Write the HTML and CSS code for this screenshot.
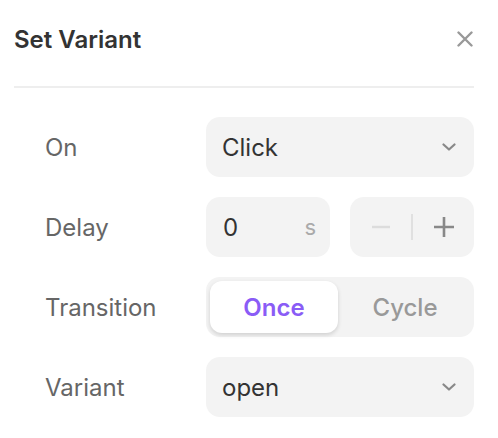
FILE: index.html
```html
<!DOCTYPE html>
<html>
<head>
<meta charset="utf-8">
<link rel="stylesheet" href="styles.css">
</head>
<body>
<div class="panel">
  <div class="header">
    <h1 class="title">Set Variant</h1>
    <button class="close" aria-label="Close">
      <svg width="16" height="16" viewBox="0 0 16 16"><path d="M1.5 1.5L14.5 14.5M14.5 1.5L1.5 14.5" stroke="#999" stroke-width="2.4" stroke-linecap="round"/></svg>
    </button>
  </div>
  <div class="divider"></div>
  <div class="form">
    <div class="label">On</div>
    <div class="select">
      <span>Click</span>
      <svg class="chev" width="14" height="8" viewBox="0 0 14 8"><path d="M1.5 1.5L7 6.5L12.5 1.5" fill="none" stroke="#888" stroke-width="2.2" stroke-linecap="round" stroke-linejoin="round"/></svg>
    </div>

    <div class="label">Delay</div>
    <div class="pair">
      <div class="input"><span>0</span><span class="unit">s</span></div>
      <div class="stepper">
        <span class="step"><svg width="22" height="22" viewBox="0 0 22 22"><path d="M2 11H20" stroke="#dcdcdc" stroke-width="2.4"/></svg></span>
        <span class="sep"></span>
        <span class="step"><svg width="22" height="22" viewBox="0 0 22 22"><path d="M1 11H21M11 1V21" stroke="#888" stroke-width="2.6"/></svg></span>
      </div>
    </div>

    <div class="label">Transition</div>
    <div class="segmented">
      <div class="seg active">Once</div>
      <div class="seg">Cycle</div>
    </div>

    <div class="label">Variant</div>
    <div class="select">
      <span>open</span>
      <svg class="chev" width="14" height="8" viewBox="0 0 14 8"><path d="M1.5 1.5L7 6.5L12.5 1.5" fill="none" stroke="#888" stroke-width="2.2" stroke-linecap="round" stroke-linejoin="round"/></svg>
    </div>
  </div>
</div>
</body>
</html>
```

FILE: styles.css
```css
html, body {
  margin: 0;
  padding: 0;
  background: #fff;
}
body {
  font-family: Inter, "Noto Sans", sans-serif;
  color: #333;
}
.panel {
  padding: 0 24px 0 14px;
}
.header {
  height: 78px;
  display: flex;
  align-items: center;
  justify-content: space-between;
}
.title {
  margin: 0;
  font-size: 24px;
  font-weight: 600;
  color: #333;
}
.close {
  border: 0;
  background: none;
  padding: 0;
  margin-right: 1px;
  width: 16px;
  height: 16px;
  display: flex;
}
.divider {
  margin-top: 8px;
  height: 2px;
  background: #eeeeee;
  width: 460px;
}
.form {
  margin-top: 29px;
  display: grid;
  grid-template-columns: 192px 268px;
  grid-auto-rows: 60px;
  row-gap: 20px;
}
.label {
  padding-left: 31px;
  display: flex;
  align-items: center;
  font-size: 24px;
  color: #666;
}
.select {
  background: #f3f3f3;
  border-radius: 14px;
  display: flex;
  align-items: center;
  justify-content: space-between;
  padding: 0 18px 0 16px;
  font-size: 24px;
  color: #333;
}
.chev {
  display: block;
}
.pair {
  display: grid;
  grid-template-columns: 1fr 1fr;
  column-gap: 20px;
}
.input {
  background: #f3f3f3;
  border-radius: 14px;
  display: flex;
  align-items: center;
  justify-content: space-between;
  padding: 0 14px 0 17px;
  font-size: 24px;
  color: #333;
}
.unit {
  color: #aaa;
  font-size: 22px;
}
.stepper {
  background: #f3f3f3;
  border-radius: 14px;
  display: flex;
  align-items: center;
  justify-content: center;
}
.step {
  flex: 1;
  display: flex;
  align-items: center;
  justify-content: center;
}
.sep {
  width: 2px;
  height: 26px;
  background: #e0e0e0;
}
.segmented {
  background: #f3f3f3;
  border-radius: 14px;
  padding: 4px;
  display: grid;
  grid-template-columns: 1fr 1fr;
}
.seg {
  display: flex;
  align-items: center;
  justify-content: center;
  font-size: 24px;
  color: #999;
  font-weight: 500;
  border-radius: 12px;
}
.seg.active {
  background: #fff;
  color: #8a5cf6;
  font-weight: 600;
  box-shadow: 0 2px 4px rgba(0,0,0,0.15);
  margin-right: 2px;
}
```
